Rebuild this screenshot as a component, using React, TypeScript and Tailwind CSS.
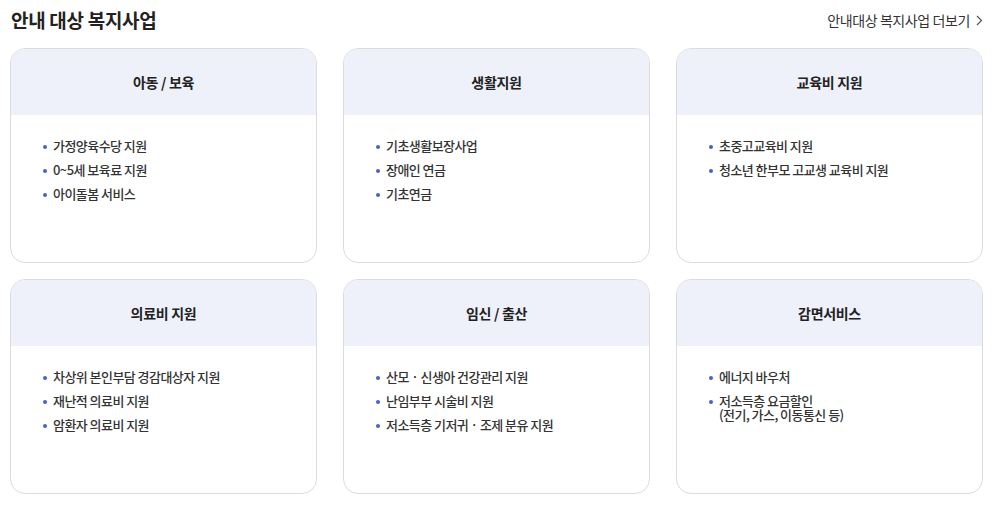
import React from "react";

const cards: { title: string; items: string[][] }[] = [
  { title: "아동 / 보육", items: [["가정양육수당 지원"], ["0~5세 보육료 지원"], ["아이돌봄 서비스"]] },
  { title: "생활지원", items: [["기초생활보장사업"], ["장애인 연금"], ["기초연금"]] },
  { title: "교육비 지원", items: [["초중고교육비 지원"], ["청소년 한부모 고교생 교육비 지원"]] },
  { title: "의료비 지원", items: [["차상위 본인부담 경감대상자 지원"], ["재난적 의료비 지원"], ["암환자 의료비 지원"]] },
  { title: "임신 / 출산", items: [["산모 · 신생아 건강관리 지원"], ["난임부부 시술비 지원"], ["저소득층 기저귀 · 조제 분유 지원"]] },
  { title: "감면서비스", items: [["에너지 바우처"], ["저소득층 요금할인", "(전기, 가스, 이동통신 등)"]] },
];

export default function App() {
  return (
    <div
      className="w-[1008px] h-[506px] bg-white pl-[10px] pr-[25px] overflow-hidden"
      style={{ fontFamily: '"Noto Sans CJK KR", "Noto Sans", sans-serif' }}
    >
      <div className="flex items-center justify-between h-[40px] pt-[1px]">
        <h2 className="text-[19px] font-semibold text-[#222] tracking-[-0.3px] pl-[1px]">안내 대상 복지사업</h2>
        <a className="flex items-center gap-[6px] text-[14px] text-[#333] tracking-[-0.4px]">
          안내대상 복지사업 더보기
          <svg width="7" height="11" viewBox="0 0 7 11" fill="none">
            <path d="M1 1l4.5 4.5L1 10" stroke="#555" strokeWidth="1.2" />
          </svg>
        </a>
      </div>
      <div className="grid grid-cols-3 gap-x-[26px] gap-y-[16px] mt-[8px]">
        {cards.map((c) => (
          <div key={c.title} className="h-[215px] border border-[#dcdcdc] rounded-[15px] overflow-hidden bg-white">
            <div className="h-[66px] bg-[#eef1fa] flex items-center justify-center text-[14px] font-bold text-[#222] tracking-[-0.3px]">
              {c.title}
            </div>
            <ul className="pt-[24px] pl-[32px] flex flex-col gap-[10px]">
              {c.items.map((lines, i) => (
                <li key={i} className="flex text-[13px] leading-[14px] font-medium text-[#333] tracking-[-0.55px]">
                  <span className="w-[4px] h-[4px] rounded-full bg-[#4a5fd0] mt-[6px] mr-[6px] shrink-0" />
                  <span className="flex flex-col">
                    {lines.map((l, j) => (
                      <span key={j} className={j > 0 ? "leading-[13px]" : ""}>
                        {l}
                      </span>
                    ))}
                  </span>
                </li>
              ))}
            </ul>
          </div>
        ))}
      </div>
    </div>
  );
}
